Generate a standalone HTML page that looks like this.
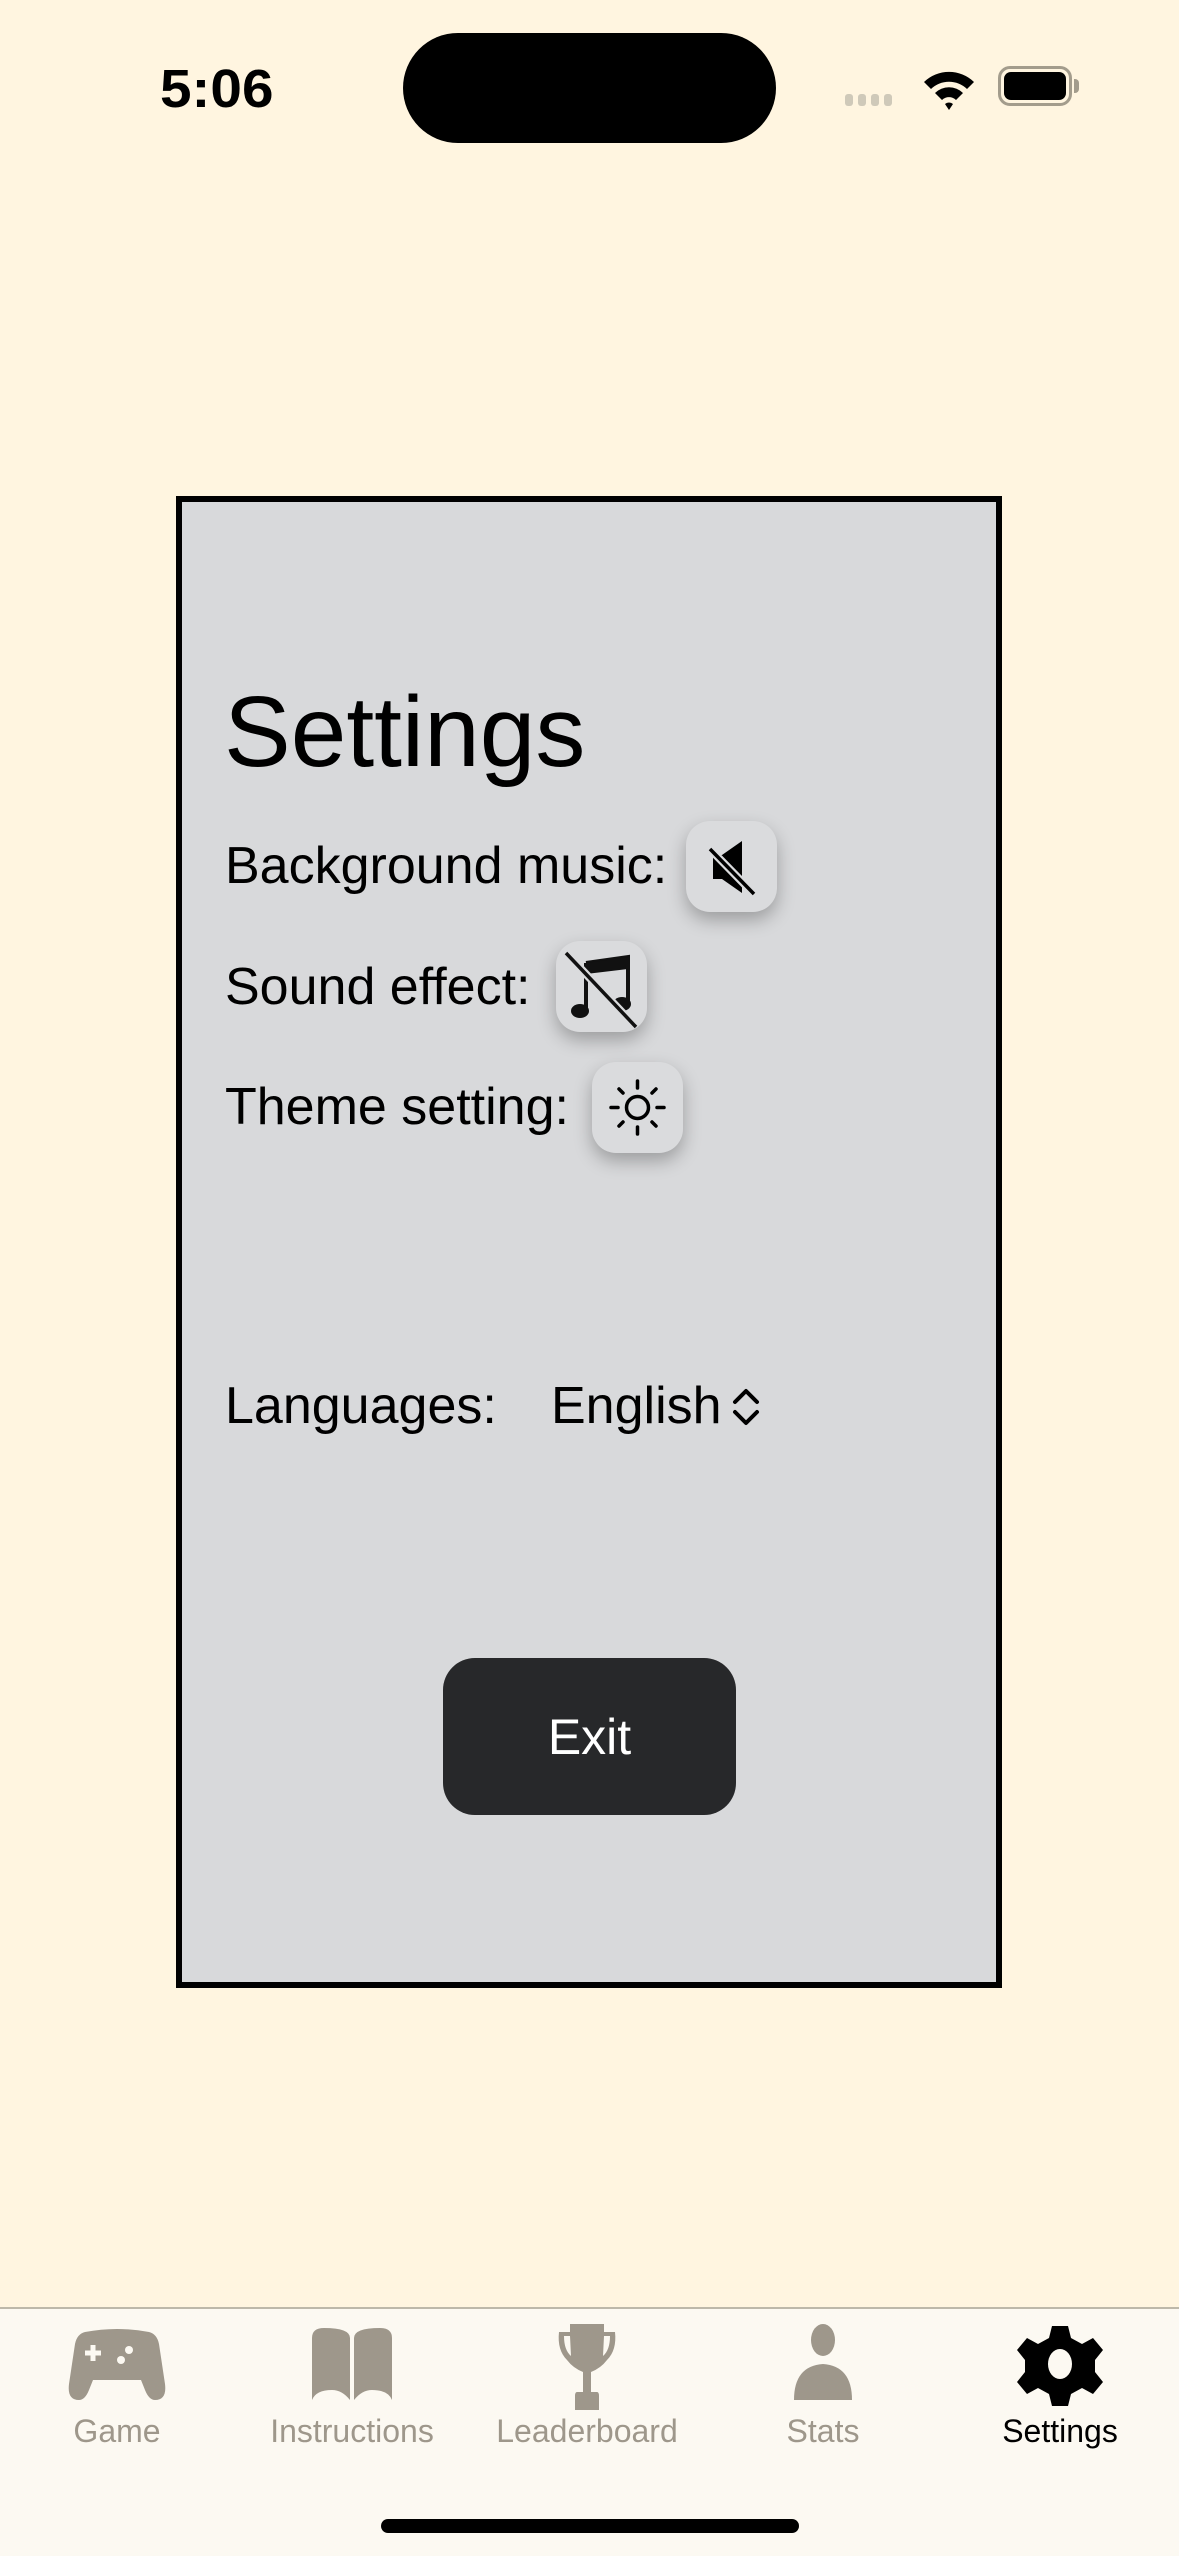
<!DOCTYPE html>
<html><head><meta charset="utf-8">
<style>
*{margin:0;padding:0;box-sizing:border-box}
html,body{width:1179px;height:2556px;overflow:hidden;background:#fff5e0;font-family:"Liberation Sans",sans-serif;color:#000}
.abs{position:absolute}
.time{left:160px;top:58px;font-size:54px;font-weight:bold;letter-spacing:0px;transform:scaleX(1.05);transform-origin:left}
.island{left:403px;top:33px;width:373px;height:110px;background:#000;border-radius:55px}
.panel{left:176px;top:496px;width:826px;height:1492px;background:#d8d9db;border:6px solid #000}
.title{left:224px;top:672px;font-size:100px;line-height:120px;letter-spacing:0px}
.lbl{font-size:52px;line-height:60px;left:225px;letter-spacing:0px}
.btn{width:91px;height:91px;background:#dadbdd;border-radius:24px;box-shadow:0 8px 18px rgba(0,0,0,0.28);display:flex;align-items:center;justify-content:center}
.exit{left:443px;top:1658px;width:293px;height:157px;background:#27282a;border-radius:32px;color:#fff;font-size:50px;display:flex;align-items:center;justify-content:center}
.tabbar{left:0;top:2307px;width:1179px;height:249px;background:#fcf9f2;border-top:2px solid #bdb8aa}
.tab{top:2413px;width:236px;text-align:center;font-size:32px;color:#9e978b;margin-left:-118px}
.ico{top:2320px;width:120px;height:90px;margin-left:-60px}
.home{left:381px;top:2519px;width:418px;height:14px;background:#000;border-radius:7px}
</style></head><body>
<div class="abs time">5:06</div>
<div class="abs island"></div>
<div class="abs" style="left:845px;top:94px;display:flex;gap:5px">
<div style="width:8px;height:12px;background:#cfc9b9;border-radius:3px"></div><div style="width:8px;height:12px;background:#cfc9b9;border-radius:3px"></div><div style="width:8px;height:12px;background:#cfc9b9;border-radius:3px"></div><div style="width:8px;height:12px;background:#cfc9b9;border-radius:3px"></div></div>
<svg class="abs" style="left:922px;top:64px" width="54" height="46" viewBox="0 0 54 46"><path d="M2 18 A36 36 0 0 1 52 18 L45 25 A26 26 0 0 0 9 25Z M13 29 A20 20 0 0 1 41 29 L34 36 A10 10 0 0 0 20 36Z M23 40 A6 6 0 0 1 31 40 L27 46Z" fill="#000"/></svg>
<div class="abs" style="left:998px;top:66px;width:74px;height:40px;border:3px solid #a39c8c;border-radius:12px;padding:3px"><div style="width:100%;height:100%;background:#000;border-radius:7px"></div></div>
<div class="abs" style="left:1074px;top:79px;width:5px;height:14px;background:#a39c8c;border-radius:0 4px 4px 0"></div>

<div class="abs panel"></div>
<div class="abs title">Settings</div>
<div class="abs lbl" style="top:836px">Background music:</div>
<div class="abs btn" style="left:686px;top:821px"><svg width="91" height="91" viewBox="0 0 91 91"><path d="M27 34h9l20-14v52l-20-14h-9z" fill="#000"/><line x1="24" y1="28" x2="68" y2="73" stroke="#dadbdd" stroke-width="8"/><line x1="24" y1="28" x2="68" y2="73" stroke="#000" stroke-width="3.5"/></svg></div>
<div class="abs lbl" style="top:957px">Sound effect:</div>
<div class="abs btn" style="left:556px;top:941px"><svg width="91" height="91" viewBox="0 0 91 91"><path d="M30 22 L72 16 V62" stroke="#111" stroke-width="4" fill="none"/><path d="M30 22 L72 16 V28 L30 33Z" fill="#111"/><line x1="30" y1="22" x2="30" y2="70" stroke="#111" stroke-width="4"/><ellipse cx="24" cy="70" rx="9" ry="7" fill="#111"/><ellipse cx="66" cy="63" rx="9" ry="7" fill="#111"/><line x1="10" y1="12" x2="80" y2="86" stroke="#dadbdd" stroke-width="8"/><line x1="10" y1="12" x2="80" y2="86" stroke="#111" stroke-width="3.5"/></svg></div>
<div class="abs lbl" style="top:1077px">Theme setting:</div>
<div class="abs btn" style="left:592px;top:1062px"><svg width="91" height="91" viewBox="0 0 91 91"><circle cx="45.5" cy="45.5" r="11" fill="none" stroke="#000" stroke-width="3.5"/><g stroke="#000" stroke-width="3.5" stroke-linecap="round"><line x1="45.5" y1="19" x2="45.5" y2="26"/><line x1="45.5" y1="65" x2="45.5" y2="72"/><line x1="19" y1="45.5" x2="26" y2="45.5"/><line x1="65" y1="45.5" x2="72" y2="45.5"/><line x1="27" y1="27" x2="31" y2="31"/><line x1="60" y1="60" x2="64" y2="64"/><line x1="64" y1="27" x2="60" y2="31"/><line x1="31" y1="60" x2="27" y2="64"/></g></svg></div>
<div class="abs lbl" style="top:1376px">Languages:</div>
<div class="abs lbl" style="top:1376px;left:551px">English</div>
<svg class="abs" style="left:728px;top:1385px" width="36" height="44" viewBox="0 0 36 44"><path d="M7 17 L18 6 L29 17 M7 27 L18 38 L29 27" stroke="#000" stroke-width="4" fill="none" stroke-linecap="round" stroke-linejoin="round"/></svg>
<div class="abs exit">Exit</div>

<div class="abs tabbar"></div>
<svg class="abs ico" style="left:117px" viewBox="0 0 120 90"><path d="M28 12 Q60 6 92 12 Q100 14 102 24 L108 64 Q110 80 98 80 Q92 80 88 70 L84 60 H36 L32 70 Q28 80 22 80 Q10 80 12 64 L18 24 Q20 14 28 12Z" fill="#9e978b"/><path d="M36 25v16M28 33h16" stroke="#fcf9f2" stroke-width="5"/><circle cx="72" cy="30" r="4" fill="#fcf9f2"/><circle cx="64" cy="40" r="4" fill="#fcf9f2"/></svg>
<svg class="abs ico" style="left:352px" viewBox="0 0 120 90"><path d="M20 18 Q20 8 32 8 Q58 8 58 18 V80 Q50 70 40 70 Q24 70 20 80Z M62 18 Q62 8 88 8 Q100 8 100 18 V80 Q96 70 80 70 Q70 70 62 80Z" fill="#9e978b"/></svg>
<svg class="abs ico" style="left:587px" viewBox="0 0 120 90"><path d="M43 4 H77 V12 H88 Q90 30 80 40 Q74 48 64 52 V72 H70 Q72 72 72 76 V90 H48 V76 Q48 72 50 72 H56 V52 Q46 48 40 40 Q30 30 32 12 H43Z M37 16 Q37 30 44 36 L43 16Z M83 16 Q83 30 76 36 L77 16Z" fill="#9e978b" fill-rule="evenodd"/></svg>
<svg class="abs ico" style="left:823px" viewBox="0 0 120 90"><ellipse cx="60" cy="20" rx="12" ry="16" fill="#9e978b"/><path d="M31 80 Q31 46 60 44 Q89 46 89 80Z" fill="#9e978b"/></svg>
<svg class="abs ico" style="left:1060px" viewBox="0 0 120 90"><g transform="translate(60,44)"><path d="M-8,-38 h16 l3,12 l11,6 l11,-6 l10,12 l-8,10 v12 l8,10 l-10,12 l-11,-6 l-11,6 l-3,12 h-16 l-3,-12 l-11,-6 l-11,6 l-10,-12 l8,-10 v-12 l-8,-10 l10,-12 l11,6 l11,-6z" fill="#000"/><ellipse cx="0" cy="0" rx="12" ry="15" fill="#fcf9f2"/></g></svg>
<div class="abs tab" style="left:117px">Game</div>
<div class="abs tab" style="left:352px">Instructions</div>
<div class="abs tab" style="left:587px">Leaderboard</div>
<div class="abs tab" style="left:823px">Stats</div>
<div class="abs tab" style="left:1060px;color:#000">Settings</div>
<div class="abs home"></div>
</body></html>
